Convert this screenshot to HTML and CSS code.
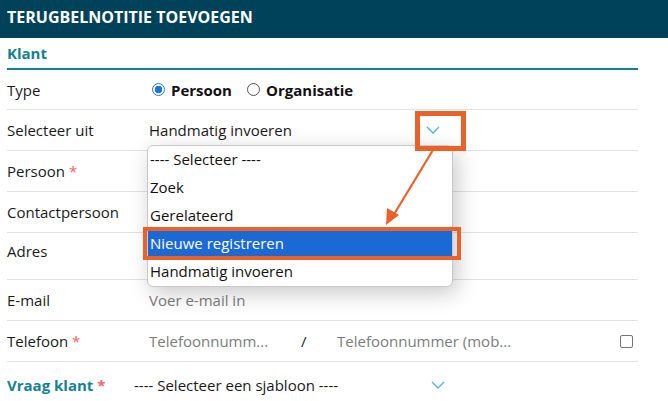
FILE: index.html
```html
<!DOCTYPE html>
<html>
<head>
    <title>Terugbelnotitie toevoegen</title>
    <link rel="stylesheet" href="styles.css">
</head>
<body>
    <div class="header">TERUGBELNOTITIE TOEVOEGEN</div>

    <div class="form">
        <div class="section-title">Klant</div>

        <div class="row first">
            <div class="label">Type</div>
            <div class="value">
                <span class="radio checked"></span><b class="radio-label">Persoon</b>
                <span class="radio"></span><b class="radio-label">Organisatie</b>
            </div>
        </div>
        <div class="row">
            <div class="label">Selecteer uit</div>
            <div class="value select-value">
                <span>Handmatig invoeren</span>
                <svg class="chevron" width="14" height="8" viewBox="0 0 14 8"><path d="M1 1 L7 7 L13 1" fill="none" stroke="#49b6de" stroke-width="1.3"/></svg>
            </div>
        </div>
        <div class="row">
            <div class="label">Persoon <span class="req">*</span></div>
        </div>
        <div class="row">
            <div class="label">Contactpersoon</div>
        </div>
        <div class="row tall">
            <div class="label">Adres</div>
        </div>
        <div class="row">
            <div class="label">E-mail</div>
            <div class="value placeholder">Voer e-mail in</div>
        </div>
        <div class="row">
            <div class="label">Telefoon <span class="req">*</span></div>
            <div class="value phone">
                <span class="placeholder phone-1">Telefoonnumm...</span>
                <span class="slash">/</span>
                <span class="placeholder phone-2">Telefoonnummer (mob...</span>
                <span class="checkbox"></span>
            </div>
        </div>
        <div class="row last">
            <div class="label section-label">Vraag klant <span class="req">*</span></div>
            <div class="value template">
                <span>---- Selecteer een sjabloon ----</span>
                <svg class="chevron" width="14" height="8" viewBox="0 0 14 8"><path d="M1 1 L7 7 L13 1" fill="none" stroke="#49b6de" stroke-width="1.3"/></svg>
            </div>
        </div>
    </div>

    <!-- open select list -->
    <ul class="dropdown">
        <li>---- Selecteer ----</li>
        <li>Zoek</li>
        <li>Gerelateerd</li>
        <li class="selected">Nieuwe registreren</li>
        <li>Handmatig invoeren</li>
    </ul>

    <!-- annotations -->
    <div class="mark mark-chevron"></div>
    <div class="mark mark-option"></div>
    <svg class="arrow" width="668" height="401" viewBox="0 0 668 401">
        <line x1="433" y1="150" x2="393" y2="216" stroke="#e8622a" stroke-width="2.2"/>
        <polygon points="386,225 387,208 399,215" fill="#e8622a"/>
    </svg>
</body>
</html>
```

FILE: styles.css
```css
body {
    font-family: "Open Sans", Arial, sans-serif;
    font-size: 15px;
    color: #1a1a1a;
    margin: 0;
    padding: 0;
    background: #fff;
    width: 668px;
    height: 401px;
    overflow: hidden;
    position: relative;
}
.header {
    background-color: #00425a;
    color: #fff;
    font-weight: bold;
    font-size: 16px;
    height: 38px;
    line-height: 34px;
    padding-left: 7px;
}
.form {
    margin-left: 7px;
    width: 631px;
}
.section-title {
    color: #148194;
    font-weight: bold;
    height: 30px;
    line-height: 30px;
    border-bottom: 2px solid #0e8296;
}
.row {
    display: flex;
    align-items: center;
    height: 40px;
    border-bottom: 1px solid #e2e2e2;
}
.row.first {
    height: 39px;
}
.row.tall {
    height: 46px;
    align-items: flex-start;
    padding-top: 8px;
    box-sizing: border-box;
    height: 47px;
}
.row.last {
    border-bottom: none;
    height: 46px;
}
.label {
    width: 142px;
    flex-shrink: 0;
}
.section-label {
    color: #148194;
    font-weight: bold;
    width: 127px;
}
.req {
    color: #f0656a;
}
.value {
    display: flex;
    align-items: center;
    flex: 1;
}
.radio {
    width: 11px;
    height: 11px;
    border: 1px solid #555;
    border-radius: 50%;
    margin: 0 6px 0 3px;
    box-sizing: content-box;
}
.radio.checked {
    border-color: #1a73e8;
    background: radial-gradient(circle, #1a73e8 0 3.5px, #fff 4px);
}
.radio-label {
    margin-right: 12px;
    color: #111;
}
.select-value span {
    width: 277px;
}
.chevron {
    display: block;
}
.template span {
    width: 297px;
}
.placeholder {
    color: #7c7c7c;
}
.phone-1 {
    width: 152px;
}
.slash {
    width: 36px;
    color: #222;
}
.phone-2 {
    flex: 1;
}
.checkbox {
    width: 11px;
    height: 11px;
    border: 1px solid #767676;
    border-radius: 2px;
    margin-right: 5px;
}
.dropdown {
    position: absolute;
    left: 147px;
    top: 145px;
    width: 304px;
    margin: 0;
    padding: 0;
    list-style: none;
    background: #fff;
    border: 1px solid #c8c8c8;
    border-radius: 6px;
    box-shadow: 4px 6px 22px rgba(0, 0, 0, 0.22);
    overflow: hidden;
}
.dropdown li {
    height: 28px;
    line-height: 27px;
    padding-left: 2px;
    color: #111;
}
.dropdown li.selected {
    background: #1a69d4;
    color: #fff;
}
.mark {
    position: absolute;
    border: 4px solid #e8622a;
}
.mark-chevron {
    left: 415px;
    top: 111px;
    width: 41px;
    height: 30px;
    border-width: 5px;
}
.mark-option {
    left: 143px;
    top: 227px;
    width: 310px;
    height: 25px;
}
.arrow {
    position: absolute;
    left: 0;
    top: 0;
}
```
